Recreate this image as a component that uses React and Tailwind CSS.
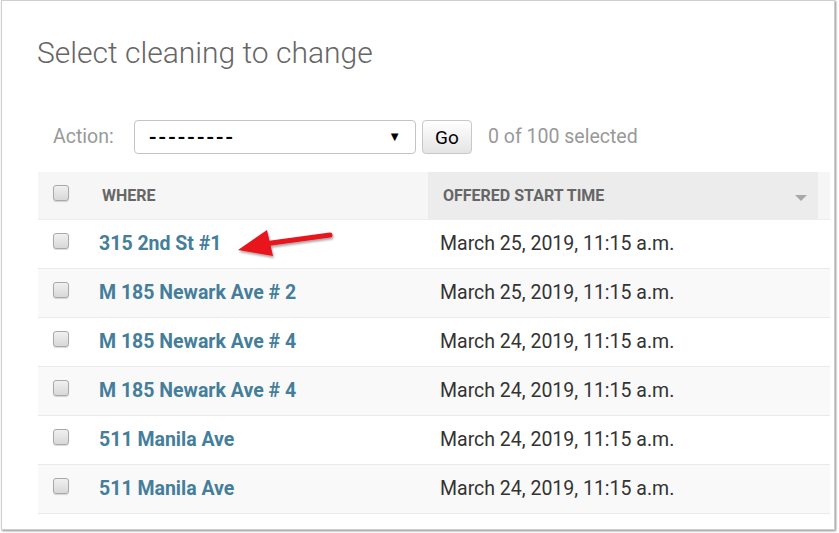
import React from 'react';

const rows = [
  { where: '315 2nd St #1', time: 'March 25, 2019, 11:15 a.m.' },
  { where: 'M 185 Newark Ave # 2', time: 'March 25, 2019, 11:15 a.m.' },
  { where: 'M 185 Newark Ave # 4', time: 'March 24, 2019, 11:15 a.m.' },
  { where: 'M 185 Newark Ave # 4', time: 'March 24, 2019, 11:15 a.m.' },
  { where: '511 Manila Ave', time: 'March 24, 2019, 11:15 a.m.' },
  { where: '511 Manila Ave', time: 'March 24, 2019, 11:15 a.m.' },
];

function Checkbox() {
  return (
    <div className="w-[16px] h-[16px] rounded-[3px] border border-[#a9a9a9] bg-gradient-to-b from-[#f0f0f0] to-[#d8d8d8] shadow-[0_1px_1px_rgba(0,0,0,0.15)] -translate-y-[3px]" />
  );
}

export default function App() {
  return (
    <div className="w-[839px] h-[533px] bg-white" style={{ fontFamily: 'Roboto, "Open Sans", sans-serif' }}>
      <div className="relative ml-[1px] w-[834px] h-[530px] border border-[#cfcfcf] shadow-[1px_1px_2px_rgba(0,0,0,0.45)] bg-white">
        {/* Title */}
        <h1 className="pl-[35px] pt-[32px] text-[30px] leading-[40px] font-light text-[#666]">
          Select cleaning to change
        </h1>

        {/* Actions */}
        <div className="flex items-center pl-[51px] mt-[47px] h-[34px]">
          <span className="text-[19.5px] text-[#999] w-[81px]">Action:</span>
          <div className="flex items-center justify-between w-[282px] h-[34px] rounded-[4px] border border-[#c4c4c4] bg-white px-[14px]">
            <span className="text-[22px] font-medium text-black tracking-[2.1px]">---------</span>
            <span className="text-[13px] text-black">▼</span>
          </div>
          <div className="ml-[6px] w-[50px] h-[34px] flex items-center justify-center rounded-[4px] border border-[#c8c8c8] bg-gradient-to-b from-white to-[#e4e4e4] text-[19px] text-black pt-[2px]">
            Go
          </div>
          <span className="ml-[16px] text-[19.5px] text-[#999]">0 of 100 selected</span>
        </div>

        {/* Table */}
        <div className="ml-[36px] mt-[18px] w-[792px]">
          <div className="flex h-[48px] bg-[#f6f6f6] border-b border-[#eee]">
            <div className="w-[390px] flex items-center">
              <div className="w-[64px] pl-[15px] flex items-center">
                <Checkbox />
              </div>
              <span className="text-[16px] font-bold text-[#666] uppercase pt-[1px]">Where</span>
            </div>
            <div className="w-[390px] flex items-center justify-between bg-[#ececec] pl-[15px] pr-[11px]">
              <span className="text-[16px] font-bold text-[#666] uppercase pt-[1px]">Offered start time</span>
              <svg width="12" height="7" viewBox="0 0 12 7" className="mt-[5px]">
                <polygon points="0,0 12,0 6,6" fill="#a8a8a8" />
              </svg>
            </div>
          </div>
          {rows.map((r, i) => (
            <div
              key={i}
              className={`flex h-[49px] border-b border-[#eaeaea] ${i % 2 === 1 ? 'bg-[#f9f9f9]' : 'bg-white'}`}
            >
              <div className="w-[390px] flex items-center">
                <div className="w-[61px] pl-[15px] flex items-center">
                  <Checkbox />
                </div>
                <a className="text-[19.5px] font-bold text-[#447e9b]">{r.where}</a>
              </div>
              <div className="flex items-center pl-[12px]">
                <span className="text-[19.5px] text-[#333]">{r.time}</span>
              </div>
            </div>
          ))}
        </div>

        {/* Annotation arrow */}
        <svg className="absolute left-0 top-0 pointer-events-none" width="834" height="530">
          <defs>
            <filter id="sh" x="-20%" y="-50%" width="140%" height="200%">
              <feDropShadow dx="1" dy="2" stdDeviation="1.2" floodColor="#000" floodOpacity="0.35" />
            </filter>
          </defs>
          <g filter="url(#sh)">
            <line x1="328" y1="234" x2="262" y2="243" stroke="#e8141b" strokeWidth="5" strokeLinecap="round" />
            <polygon points="236,249 265,229 271,255" fill="#e8141b" />
          </g>
        </svg>
      </div>
    </div>
  );
}
